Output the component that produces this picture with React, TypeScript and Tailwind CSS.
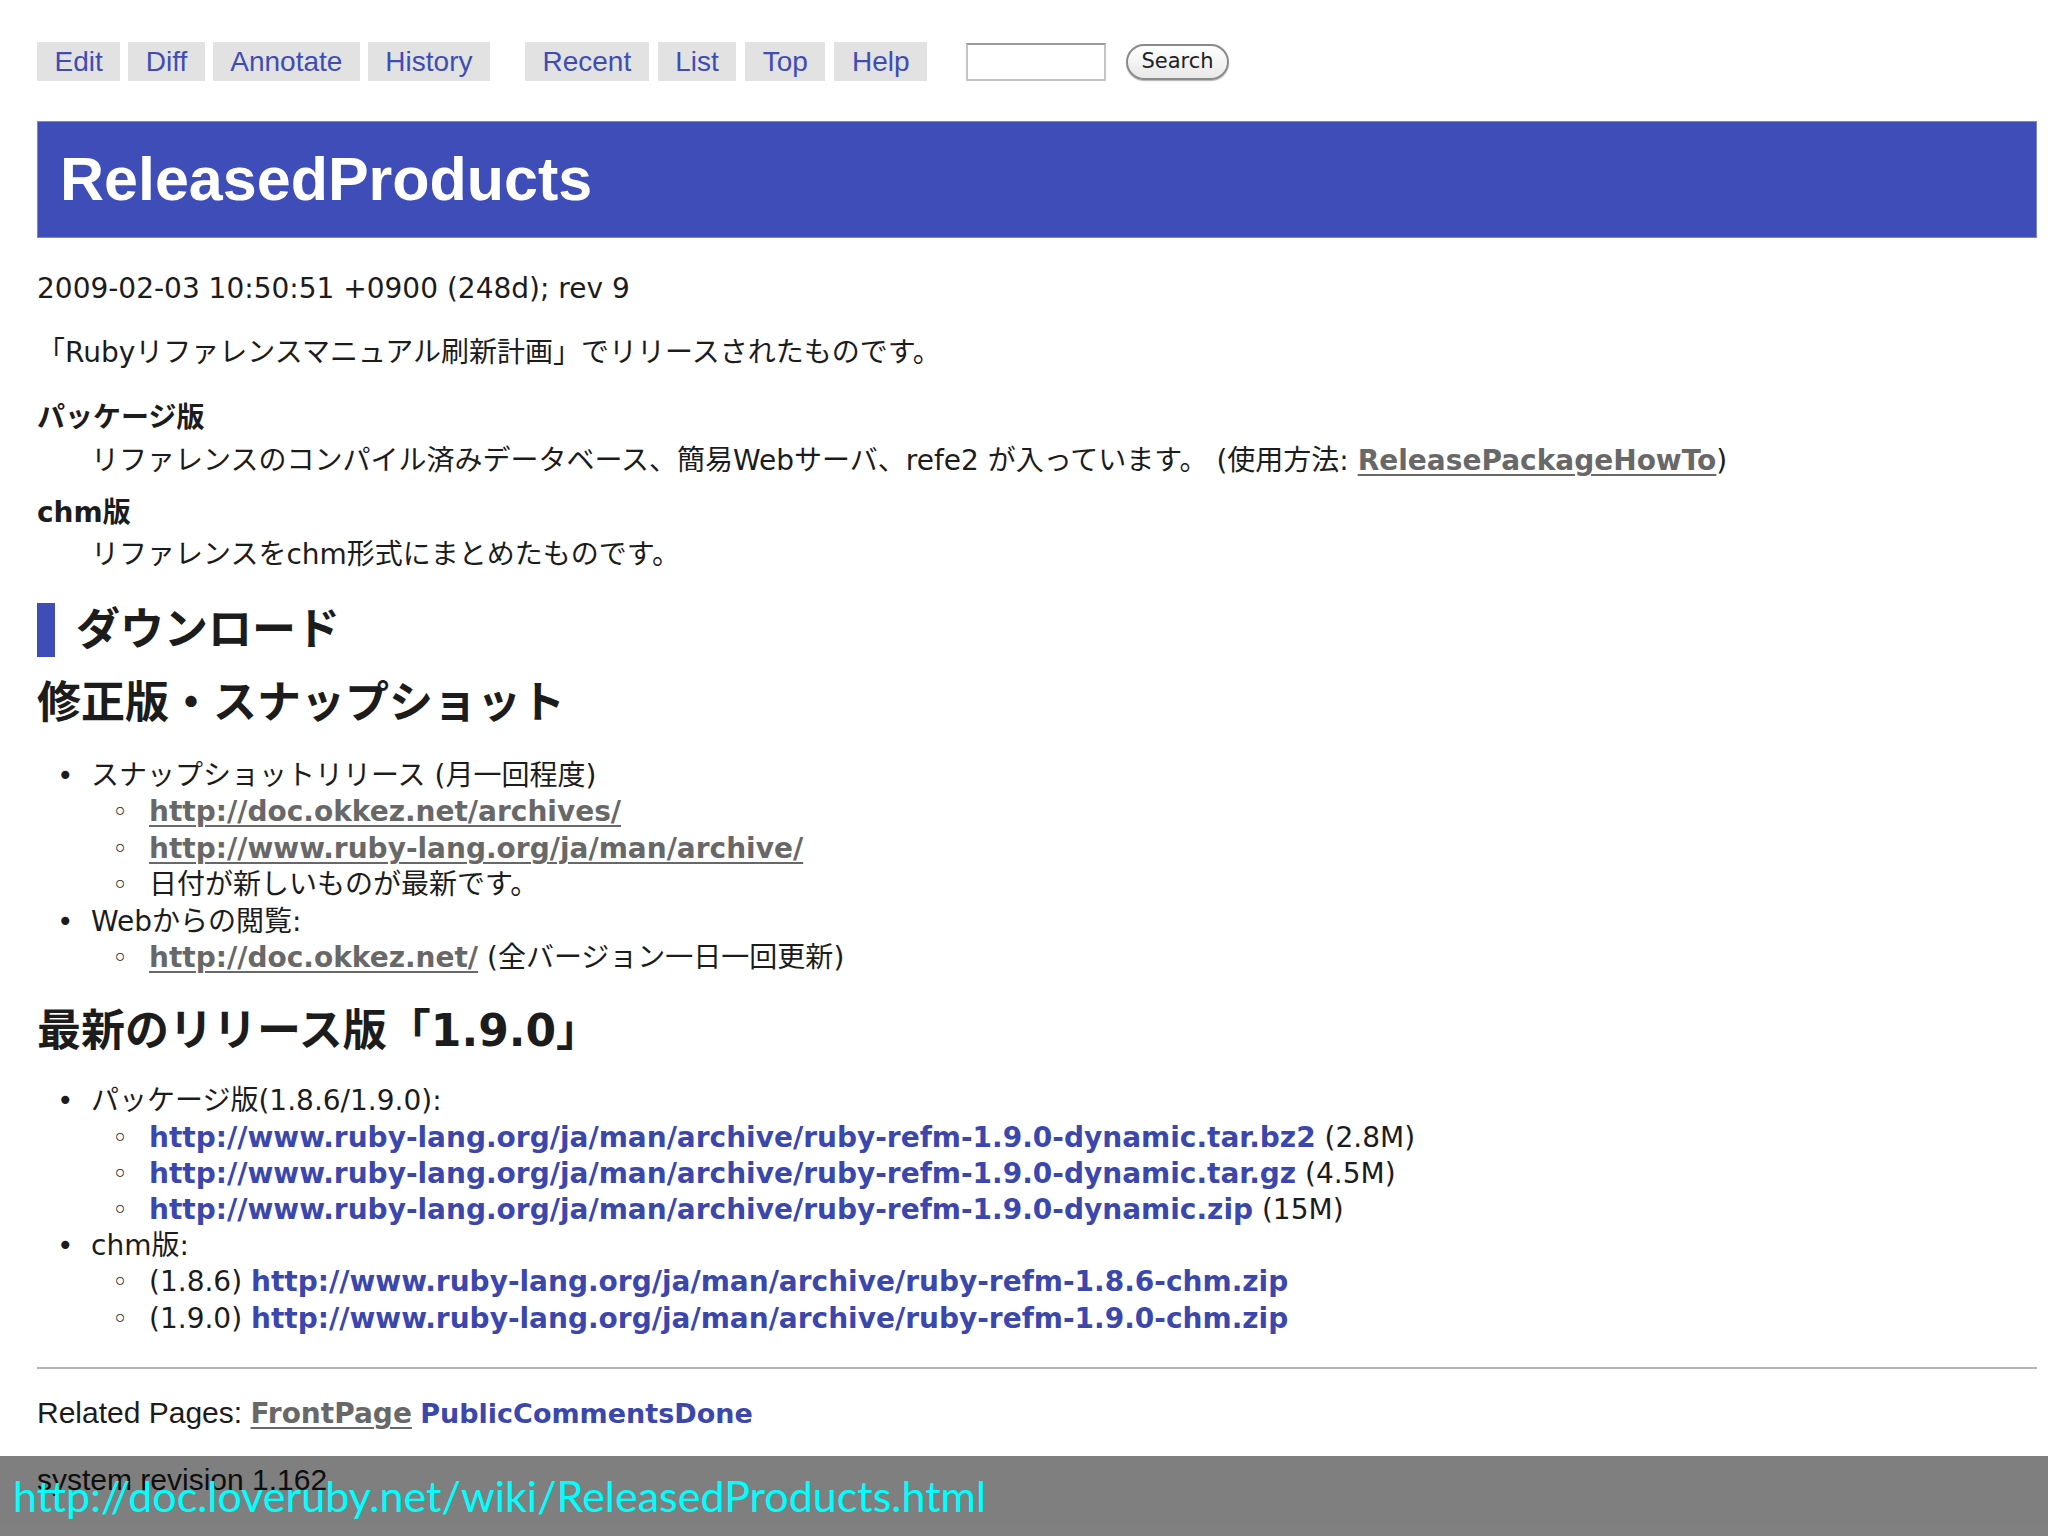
import React from 'react';

const navLeft = ['Edit', 'Diff', 'Annotate', 'History'];
const navRight = ['Recent', 'List', 'Top', 'Help'];

const base = 'http://www.ruby-lang.org/ja/man/archive/';

const packages = [
  { href: base + 'ruby-refm-1.9.0-dynamic.tar.bz2', size: '(2.8M)' },
  { href: base + 'ruby-refm-1.9.0-dynamic.tar.gz', size: '(4.5M)' },
  { href: base + 'ruby-refm-1.9.0-dynamic.zip', size: '(15M)' },
];

const chms = [
  { ver: '(1.8.6)', href: base + 'ruby-refm-1.8.6-chm.zip' },
  { ver: '(1.9.0)', href: base + 'ruby-refm-1.9.0-chm.zip' },
];

function Tab({ label }: { label: string }) {
  return (
    <a className="flex h-[39px] items-center bg-[#e2e2e2] px-[17.5px] text-[28px] text-[#3f4cb4]">
      {label}
    </a>
  );
}

// visited links are grey + underlined, fresh ones blue
function Visited({ children }: { children: React.ReactNode }) {
  return <a className="font-bold text-[#686868] underline decoration-2 underline-offset-4">{children}</a>;
}

function Fresh({ children }: { children: React.ReactNode }) {
  return <a className="font-bold text-[#3b47ad]">{children}</a>;
}

// bullet rows: marker in a fixed column, text + nested list in the other
function Item({ sub, children }: { sub?: boolean; children: React.ReactNode }) {
  return (
    <li className={sub ? 'grid grid-cols-[36px_1fr]' : 'grid grid-cols-[34px_1fr]'}>
      <span className={sub ? 'text-[22px] font-bold' : ''}>{sub ? '◦' : '•'}</span>
      <div>{children}</div>
    </li>
  );
}

export default function App() {
  return (
    <div className="relative min-h-[1536px] overflow-hidden bg-white text-[#1c1c1c] font-['DejaVu_Sans','Noto_Sans_CJK_JP',sans-serif]">
      <div className="pl-[37px] pr-[11px] pt-[42px]">
        {/* top menu */}
        <div className="flex items-center font-['Liberation_Sans',Arial,sans-serif]">
          <div className="flex gap-[8px]">
            {navLeft.map((n) => (
              <Tab key={n} label={n} />
            ))}
          </div>
          <div className="ml-[35px] flex gap-[9px]">
            {navRight.map((n) => (
              <Tab key={n} label={n} />
            ))}
          </div>
          <input
            type="text"
            className="ml-[39px] h-[38px] w-[140px] border-2 border-[#c4c4c4] border-t-[#9a9a9a] bg-white"
          />
          <button className="ml-[20px] h-[36px] w-[103px] rounded-full border-2 border-[#8a8a8a] bg-gradient-to-b from-white to-[#e8e8e8] text-[21px] text-[#222] font-['DejaVu_Sans',sans-serif] shadow-[0_1px_1px_rgba(0,0,0,0.3)]">
            Search
          </button>
        </div>

        {/* page title */}
        <div className="mt-[40px] flex h-[117px] items-center border border-[#7c86cc] bg-[#3f4db8] pl-[22px]">
          <h1 className="text-[61px] font-bold text-white font-['Liberation_Sans',Arial,sans-serif]">ReleasedProducts</h1>
        </div>

        <div className="text-[28px] leading-[36px]">
          <p className="mt-[33px]">2009-02-03 10:50:51 +0900 (248d); rev 9</p>
          <p className="mt-[28px]">「Rubyリファレンスマニュアル刷新計画」でリリースされたものです。</p>

          <dl className="mt-[29px]">
            <dt className="font-bold">パッケージ版</dt>
            <dd className="mt-[7px] pl-[54px]">
              リファレンスのコンパイル済みデータベース、簡易Webサーバ、refe2 が入っています。 (使用方法:{' '}
              <Visited>ReleasePackageHowTo</Visited>)
            </dd>
            <dt className="mt-[16px] font-bold">chm版</dt>
            <dd className="mt-[6px] pl-[54px]">リファレンスをchm形式にまとめたものです。</dd>
          </dl>

          <div className="mt-[30px] flex items-center">
            <span className="h-[54px] w-[18px] bg-[#3f4db8]" />
            <h2 className="ml-[21px] text-[44px] font-bold leading-[54px]">ダウンロード</h2>
          </div>

          <h3 className="mt-[19px] text-[44px] font-bold leading-[54px]">修正版・スナップショット</h3>

          <ul className="mt-[28px] pl-[20px] leading-[36.4px]">
            <Item>
              スナップショットリリース (月一回程度)
              <ul className="pl-[22px]">
                <Item sub>
                  <Visited>http://doc.okkez.net/archives/</Visited>
                </Item>
                <Item sub>
                  <Visited>http://www.ruby-lang.org/ja/man/archive/</Visited>
                </Item>
                <Item sub>日付が新しいものが最新です。</Item>
              </ul>
            </Item>
            <Item>
              Webからの閲覧:
              <ul className="pl-[22px]">
                <Item sub>
                  <Visited>http://doc.okkez.net/</Visited> (全バージョン一日一回更新)
                </Item>
              </ul>
            </Item>
          </ul>

          <h3 className="mt-[28px] text-[44px] font-bold leading-[54px]">最新のリリース版「1.9.0」</h3>

          <ul className="mt-[25px] pl-[20px] leading-[36.2px]">
            <Item>
              パッケージ版(1.8.6/1.9.0):
              <ul className="pl-[22px]">
                {packages.map((p) => (
                  <Item sub key={p.href}>
                    <Fresh>{p.href}</Fresh> {p.size}
                  </Item>
                ))}
              </ul>
            </Item>
            <Item>
              chm版:
              <ul className="pl-[22px]">
                {chms.map((c) => (
                  <Item sub key={c.href}>
                    {c.ver} <Fresh>{c.href}</Fresh>
                  </Item>
                ))}
              </ul>
            </Item>
          </ul>
        </div>

        <hr className="mt-[30px] border-0 border-t-2 border-[#b4b4b4]" />

        <div className="font-['Liberation_Sans',Arial,sans-serif] text-[30px] leading-[36px]">
          <p className="mt-[26px]">
            Related Pages:{' '}
            <a className="font-bold text-[28px] text-[#686868] underline decoration-2 underline-offset-4 font-['DejaVu_Sans',sans-serif]">
              FrontPage
            </a>{' '}
            <a className="font-bold text-[27px] text-[#3b47ad] font-['DejaVu_Sans',sans-serif]">PublicCommentsDone</a>
          </p>
          <p className="mt-[30px]">system revision 1.162</p>
        </div>
      </div>

      {/* caption band from the video */}
      <div className="absolute bottom-0 left-0 right-0 flex h-[80px] items-center bg-black/50 pl-[13px]">
        <span className="text-[43px] text-[#00ffff] font-['Lato',sans-serif]">
          http://doc.loveruby.net/wiki/ReleasedProducts.html
        </span>
      </div>
    </div>
  );
}
